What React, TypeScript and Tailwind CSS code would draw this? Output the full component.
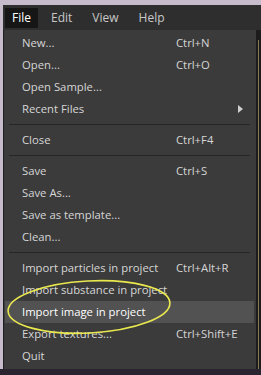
import React from "react";

type Item = { label: string; shortcut?: string; arrow?: boolean; active?: boolean } | "sep";

const items: Item[] = [
  { label: "New...", shortcut: "Ctrl+N" },
  { label: "Open...", shortcut: "Ctrl+O" },
  { label: "Open Sample..." },
  { label: "Recent Files", arrow: true },
  "sep",
  { label: "Close", shortcut: "Ctrl+F4" },
  "sep",
  { label: "Save", shortcut: "Ctrl+S" },
  { label: "Save As..." },
  { label: "Save as template..." },
  { label: "Clean..." },
  "sep",
  { label: "Import particles in project", shortcut: "Ctrl+Alt+R" },
  { label: "Import substance in project" },
  { label: "Import image in project", active: true },
  { label: "Export textures...", shortcut: "Ctrl+Shift+E" },
  { label: "Quit" },
];

export default function App() {
  return (
    <div
      className="relative w-[261px] h-[375px] overflow-hidden bg-[#c6bccb] pt-[5px] pl-[3px]"
      style={{ fontFamily: '"Open Sans", "Noto Sans", sans-serif' }}
    >
      <div className="flex flex-col h-full bg-[#232323]">
        {/* menubar */}
        <div className="flex items-center h-[25px] bg-[#2e2e2e] text-[12px] text-[#c8c8c8] pl-[2px]">
          <div className="h-[20px] w-[33px] bg-[#161616] text-white flex items-center justify-center">File</div>
          <div className="ml-[13px]">Edit</div>
          <div className="ml-[20px]">View</div>
          <div className="ml-[20px]">Help</div>
        </div>
        <div className="flex flex-1 min-h-0">
          {/* menu panel */}
          <div className="w-[253px] h-[339px] bg-[#3b3b3b] border-l border-[#1e1e1e] pt-[2px] pr-[2px] pl-[1px] text-[11.3px] text-[#d6d6d6]">
            {items.map((it, i) =>
              it === "sep" ? (
                <div key={i} className="h-[9px] flex items-center px-[4px]">
                  <div className="h-px w-full bg-[#252525]" />
                </div>
              ) : (
                <div
                  key={i}
                  className={`h-[22px] flex items-center pl-[17px] ${it.active ? "bg-[#525252] text-white" : ""}`}
                >
                  <span className="w-[154px] whitespace-nowrap">{it.label}</span>
                  <span className="whitespace-nowrap">{it.shortcut}</span>
                  {it.arrow && (
                    <svg width="6" height="8" viewBox="0 0 6 8" className="ml-[62px]">
                      <path d="M0 0 L5 4 L0 8 Z" fill="#cfcfcf" />
                    </svg>
                  )}
                </div>
              )
            )}
          </div>
          <div className="flex-1 flex bg-[#1c1c1c] pt-[10px] pl-[2px]">
            <div className="w-px h-full bg-[#8a7a55]" />
          </div>
        </div>
      </div>
      <div className="absolute left-0 right-0 bottom-0 h-[6px] bg-[#2a2430]" />
      <svg className="absolute left-0 top-0 pointer-events-none" width="261" height="375">
        <ellipse
          cx="89"
          cy="307"
          rx="81"
          ry="26"
          transform="rotate(-3 89 307)"
          fill="none"
          stroke="#e9e84f"
          strokeWidth="1.6"
        />
      </svg>
    </div>
  );
}
